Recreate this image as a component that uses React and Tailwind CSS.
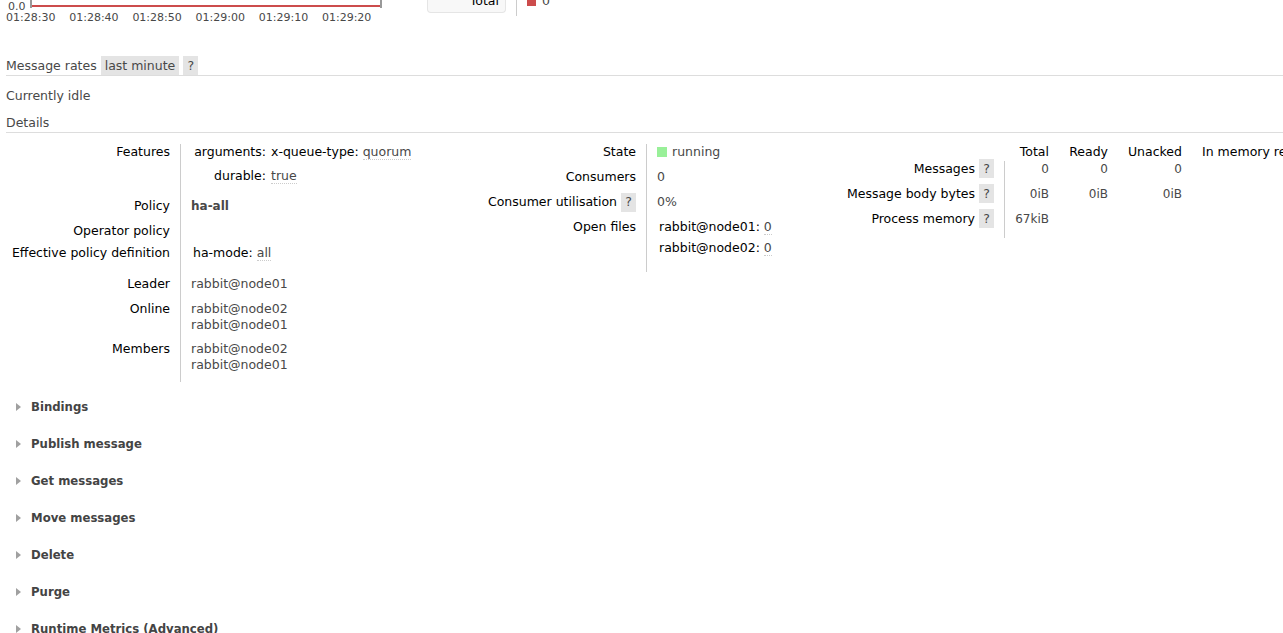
import React from "react";

const Help = () => (
  <span className="inline-flex h-[19px] w-[15px] items-center justify-center bg-[#e4e4e4] text-[#484848]">
    ?
  </span>
);

const Abbr = ({ children }) => (
  <span className="border-b border-dotted border-[#ccc] text-[#484848]">{children}</span>
);

// left / middle detail tables share the same row layout
const Row = ({ label, labelW, valueW, h, children }) => (
  <div className="flex" style={{ height: h }}>
    <div className="text-right text-black" style={{ width: labelW }}>
      {label}
    </div>
    <div className="ml-[10px] border-l border-[#ccc] pl-[10px]" style={{ width: valueW }}>
      {children}
    </div>
  </div>
);

const times = ["01:28:30", "01:28:40", "01:28:50", "01:29:00", "01:29:10", "01:29:20"];
const sections = [
  "Bindings",
  "Publish message",
  "Get messages",
  "Move messages",
  "Delete",
  "Purge",
  "Runtime Metrics (Advanced)",
];

export default function App() {
  return (
    <div className="h-[633px] w-[1283px] overflow-hidden bg-white font-['DejaVu_Sans',Verdana,sans-serif] text-[12.5px] leading-[16px] text-[#484848]">
      {/* tail of the chart above */}
      <div className="flex h-[25px]">
        <div className="w-[400px]">
          <div className="flex h-[11px] items-start">
            <span className="mt-[1px] w-[30px] pl-[8px] text-[11px] leading-[12px]">0.0</span>
            <div className="flex h-[8px] w-[352px] flex-col justify-end border-x-2 border-[#999]">
              <div className="mb-[1px] h-[2px] bg-[#cc4c4c]" />
            </div>
          </div>
          <div className="mt-[1px] flex pl-[6px] text-[11px] leading-[12px]">
            {times.map((t) => (
              <span key={t} className="w-[63.2px]">
                {t}
              </span>
            ))}
          </div>
        </div>
        <div className="ml-[27px] flex items-start">
          <div className="h-[13px] w-[79px] overflow-hidden rounded-b border border-t-0 border-[#e5e5e5] bg-[#f8f8f8] pr-[6px] text-right text-black">
            <span className="-mt-[6px] block leading-[14px]">Total</span>
          </div>
          <div className="ml-[10px] h-[16px] w-[1px] bg-[#ccc]" />
          <div className="ml-[10px] h-[6px] w-[9px] bg-[#cc4c4c]" />
          <span className="-mt-[7px] ml-[6px]">0</span>
        </div>
      </div>

      <div className="ml-[6px] mt-[31px] flex h-[20px] items-stretch border-b border-[#ddd]">
        <span className="flex items-center">Message rates</span>
        <span className="ml-[4px] flex items-center bg-[#e4e4e4] px-[4px]">last minute</span>
        <span className="ml-[4px] flex w-[15px] items-center justify-center bg-[#e4e4e4]">?</span>
      </div>

      <div className="ml-[6px] mt-[12px]">Currently idle</div>
      <div className="ml-[6px] mt-[11px] h-[18px] border-b border-[#ddd]">Details</div>

      <div className="mt-[11px] flex items-start">
        {/* general */}
        <div className="ml-[6px]">
          <Row label="Features" labelW={164} valueW={260} h={54}>
            <div className="grid grid-cols-[75px_auto] gap-x-[5px] text-black">
              <span className="text-right">arguments:</span>
              <span>
                x-queue-type: <Abbr>quorum</Abbr>
              </span>
              <span className="mt-[8px] text-right">durable:</span>
              <span className="mt-[8px]">
                <Abbr>true</Abbr>
              </span>
            </div>
          </Row>
          <Row label="Policy" labelW={164} valueW={260} h={25}>
            <b className="text-[12px]">ha-all</b>
          </Row>
          <Row label="Operator policy" labelW={164} valueW={260} h={22} />
          <Row label="Effective policy definition" labelW={164} valueW={260} h={31}>
            <span className="ml-[2px] text-black">
              ha-mode: <Abbr>all</Abbr>
            </span>
          </Row>
          <Row label="Leader" labelW={164} valueW={260} h={25}>
            rabbit@node01
          </Row>
          <Row label="Online" labelW={164} valueW={260} h={40}>
            <div>rabbit@node02</div>
            <div>rabbit@node01</div>
          </Row>
          <Row label="Members" labelW={164} valueW={260} h={41}>
            <div>rabbit@node02</div>
            <div>rabbit@node01</div>
          </Row>
        </div>

        {/* state */}
        <div>
          <Row label="State" labelW={196} valueW={190} h={25}>
            <span className="flex items-center">
              <span className="mr-[5px] h-[10px] w-[10px] bg-[#99f099]" />
              running
            </span>
          </Row>
          <Row label="Consumers" labelW={196} valueW={190} h={25}>
            0
          </Row>
          <Row
            label={
              <span className="-mt-[2px] inline-flex items-center gap-[4px]">
                Consumer utilisation <Help />
              </span>
            }
            labelW={196}
            valueW={190}
            h={25}
          >
            0%
          </Row>
          <Row label="Open files" labelW={196} valueW={190} h={53}>
            <div className="ml-[2px] text-black">
              rabbit@node01: <Abbr>0</Abbr>
            </div>
            <div className="ml-[2px] mt-[5px] text-black">
              rabbit@node02: <Abbr>0</Abbr>
            </div>
          </Row>
        </div>

        {/* message counts */}
        <div className="text-black">
          <div className="flex h-[17px] whitespace-nowrap">
            <div className="w-[169px]" />
            <span className="w-[44px] text-right">Total</span>
            <span className="w-[59px] text-right">Ready</span>
            <span className="w-[74px] text-right">Unacked</span>
            <span className="pl-[20px]">In memory ready</span>
          </div>
          {[
            ["Messages", "0", "0", "0", 25],
            ["Message body bytes", "0iB", "0iB", "0iB", 25],
            ["Process memory", "67kiB", "", "", 27],
          ].map(([label, a, b, c, h]) => (
            <div key={label} className="flex" style={{ height: h }}>
              <div className="flex w-[158px] items-start justify-end gap-[4px] whitespace-nowrap">
                <span>{label}</span>
                <span className="-mt-[2px]">
                  <Help />
                </span>
              </div>
              <div className="ml-[10px] flex border-l border-[#ccc] text-[12px] text-[#484848]">
                <span className="w-[44px] text-right">{a}</span>
                <span className="w-[59px] text-right">{b}</span>
                <span className="w-[74px] text-right">{c}</span>
              </div>
            </div>
          ))}
        </div>
      </div>

      <div className="mt-[17px]">
        {sections.map((s) => (
          <div key={s} className="mb-[21px] flex h-[16px] items-center">
            <span className="ml-[16px] h-0 w-0 border-y-[4px] border-l-[5px] border-y-transparent border-l-[#a0a0a0]" />
            <span className="ml-[10px] text-[11.7px] font-bold text-[#444]">{s}</span>
          </div>
        ))}
      </div>
    </div>
  );
}
